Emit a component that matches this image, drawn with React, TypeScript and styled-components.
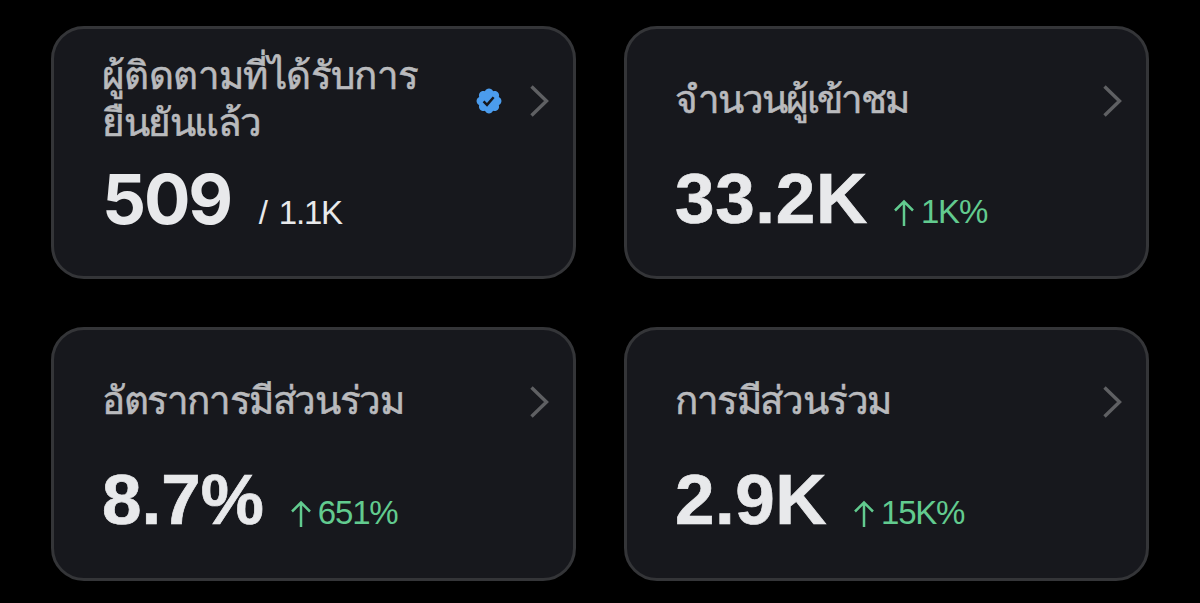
import styled, { createGlobalStyle } from 'styled-components'

const colors = {
  page: '#000000',
  card: '#17181d',
  border: '#343538',
  label: '#b9babd',
  value: '#e8e9eb',
  green: '#62cb8f',
  blue: '#4b9ced',
  chevron: '#5f6063',
}

const GlobalStyle = createGlobalStyle`
  body {
    margin: 0;
    background: ${colors.page};
  }
`

const Grid = styled.main`
  box-sizing: border-box;
  width: 1200px;
  height: 603px;
  padding: 26px 51px 22px;
  display: grid;
  grid-template-columns: 525px 525px;
  grid-template-rows: 253px 254px;
  gap: 48px;
  overflow: hidden;
`

const Card = styled.section`
  box-sizing: border-box;
  display: flex;
  flex-direction: column;
  border: 3px solid ${colors.border};
  border-radius: 33px;
  background: ${colors.card};
  padding: 0 23px 0 48px;
`

const Header = styled.header`
  height: 139px;
  padding-top: 2px;
  display: flex;
  align-items: center;
`

const Label = styled.h2`
  flex: 1;
  margin: 0 0 3px;
  color: ${colors.label};
  font: 400 38.5px/47px 'Liberation Sans', sans-serif;
  -webkit-text-stroke: 0.6px ${colors.label};
  white-space: nowrap;
`

const LabelLine = styled.span<{ $spacing: number }>`
  display: block;
  letter-spacing: ${({ $spacing }) => $spacing}px;
`

const BadgeIcon = styled.svg`
  width: 26px;
  height: 26px;
  margin-right: 27px;
`

const ChevronIcon = styled.svg`
  width: 21px;
  height: 34px;
  margin-top: 1px;
`

const Stats = styled.div`
  display: flex;
  align-items: baseline;
  white-space: nowrap;
`

const Value = styled.span<{ $spacing: number, $wide: boolean }>`
  color: ${colors.value};
  font-family: ${({ $wide }) => ($wide ? 'Inter' : "'Liberation Sans'")}, sans-serif;
  font-size: ${({ $wide }) => ($wide ? 69 : 71)}px;
  font-weight: 700;
  line-height: 58px;
  letter-spacing: ${({ $spacing }) => $spacing}px;
  -webkit-text-stroke: ${({ $wide }) => ($wide ? 0 : 0.7)}px ${colors.value};
`

const Detail = styled.span<{ $positive: boolean, $gap: number }>`
  display: flex;
  align-items: baseline;
  margin-left: ${({ $gap }) => $gap}px;
  color: ${({ $positive }) => ($positive ? colors.green : colors.value)};
  font: 400 33px/40px 'Liberation Sans', sans-serif;
  letter-spacing: -1.2px;
  word-spacing: 4px;
`

const ArrowIcon = styled.svg`
  width: 20px;
  height: 27px;
  margin-right: 7px;
  transform: translateY(3px);
`

const VerifiedBadge = () => (
  <BadgeIcon viewBox="1.2 1.2 19.6 19.6" aria-hidden="true">
    <path
      fill={colors.blue}
      d="M20.396 11c-.018-.646-.215-1.275-.57-1.816-.354-.54-.852-.972-1.438-1.246.223-.607.27-1.264.14-1.897-.131-.634-.437-1.218-.882-1.687-.47-.445-1.053-.75-1.687-.882-.633-.13-1.29-.083-1.897.14-.273-.587-.704-1.086-1.245-1.44S11.647 1.62 11 1.604c-.646.017-1.273.213-1.813.568s-.969.854-1.24 1.44c-.608-.223-1.267-.272-1.902-.14-.635.13-1.22.436-1.69.882-.445.47-.749 1.055-.878 1.688-.13.633-.08 1.29.144 1.896-.587.274-1.087.705-1.443 1.245-.356.54-.555 1.17-.574 1.817.02.647.218 1.276.574 1.817.356.54.856.972 1.443 1.245-.224.606-.274 1.263-.144 1.896.13.634.433 1.218.877 1.688.47.443 1.054.747 1.687.878.633.132 1.29.084 1.897-.136.274.586.705 1.084 1.246 1.439.54.354 1.17.551 1.816.569.647-.016 1.276-.213 1.817-.567s.972-.854 1.245-1.44c.604.239 1.266.296 1.903.164.636-.132 1.22-.447 1.68-.907.46-.46.776-1.044.908-1.681s.075-1.299-.165-1.903c.586-.274 1.084-.705 1.439-1.246.354-.54.551-1.17.569-1.816z"
    />
    <path d="M6.9 11.3l2.6 2.6 5-5.7" fill="none" stroke={colors.card} strokeWidth="1.9" />
  </BadgeIcon>
)

const Chevron = () => (
  <ChevronIcon viewBox="0 0 21 34" fill="none" stroke={colors.chevron} strokeWidth="3.4" aria-hidden="true">
    <path d="M2.5 2.5L17.5 17L2.5 31.5" />
  </ChevronIcon>
)

const UpArrow = () => (
  <ArrowIcon viewBox="0 0 20 27" fill="none" stroke={colors.green} strokeWidth="2.5" aria-hidden="true">
    <path d="M10 27V2.5M1 11.5L10 2.5L19 11.5" />
  </ArrowIcon>
)

interface LabelText {
  text: string,
  spacing: number,
}

interface StatCardProps {
  label: LabelText[],
  value: string,
  detail: string,
  spacing: number,
  gap: number,
  verified?: boolean,
  positive?: boolean,
}

const StatCard = ({ label, value, detail, spacing, gap, verified = false, positive = false }: StatCardProps) => (
  <Card>
    <Header>
      <Label>
        {label.map((line) => (
          <LabelLine key={line.text} $spacing={line.spacing}>{line.text}</LabelLine>
        ))}
      </Label>
      {verified && <VerifiedBadge />}
      <Chevron />
    </Header>
    <Stats>
      <Value $spacing={spacing} $wide={verified}>{value}</Value>
      <Detail $positive={positive} $gap={gap}>
        {positive && <UpArrow />}
        {detail}
      </Detail>
    </Stats>
  </Card>
)

const App = () => (
  <>
    <GlobalStyle />
    <Grid>
      <StatCard
        label={[{ text: 'ผู้ติดตามที่ได้รับการ', spacing: -0.6 }, { text: 'ยืนยันแล้ว', spacing: -1.5 }]}
        value="509"
        detail="/ 1.1K"
        spacing={-2.2}
        gap={28}
        verified
      />
      <StatCard label={[{ text: 'จำนวนผู้เข้าชม', spacing: -2.1 }]} value="33.2K" detail="1K%" spacing={0.7} gap={26} positive />
      <StatCard label={[{ text: 'อัตราการมีส่วนร่วม', spacing: -1.4 }]} value="8.7%" detail="651%" spacing={0} gap={27} positive />
      <StatCard label={[{ text: 'การมีส่วนร่วม', spacing: -1.4 }]} value="2.9K" detail="15K%" spacing={0.5} gap={27} positive />
    </Grid>
  </>
)

export default App
